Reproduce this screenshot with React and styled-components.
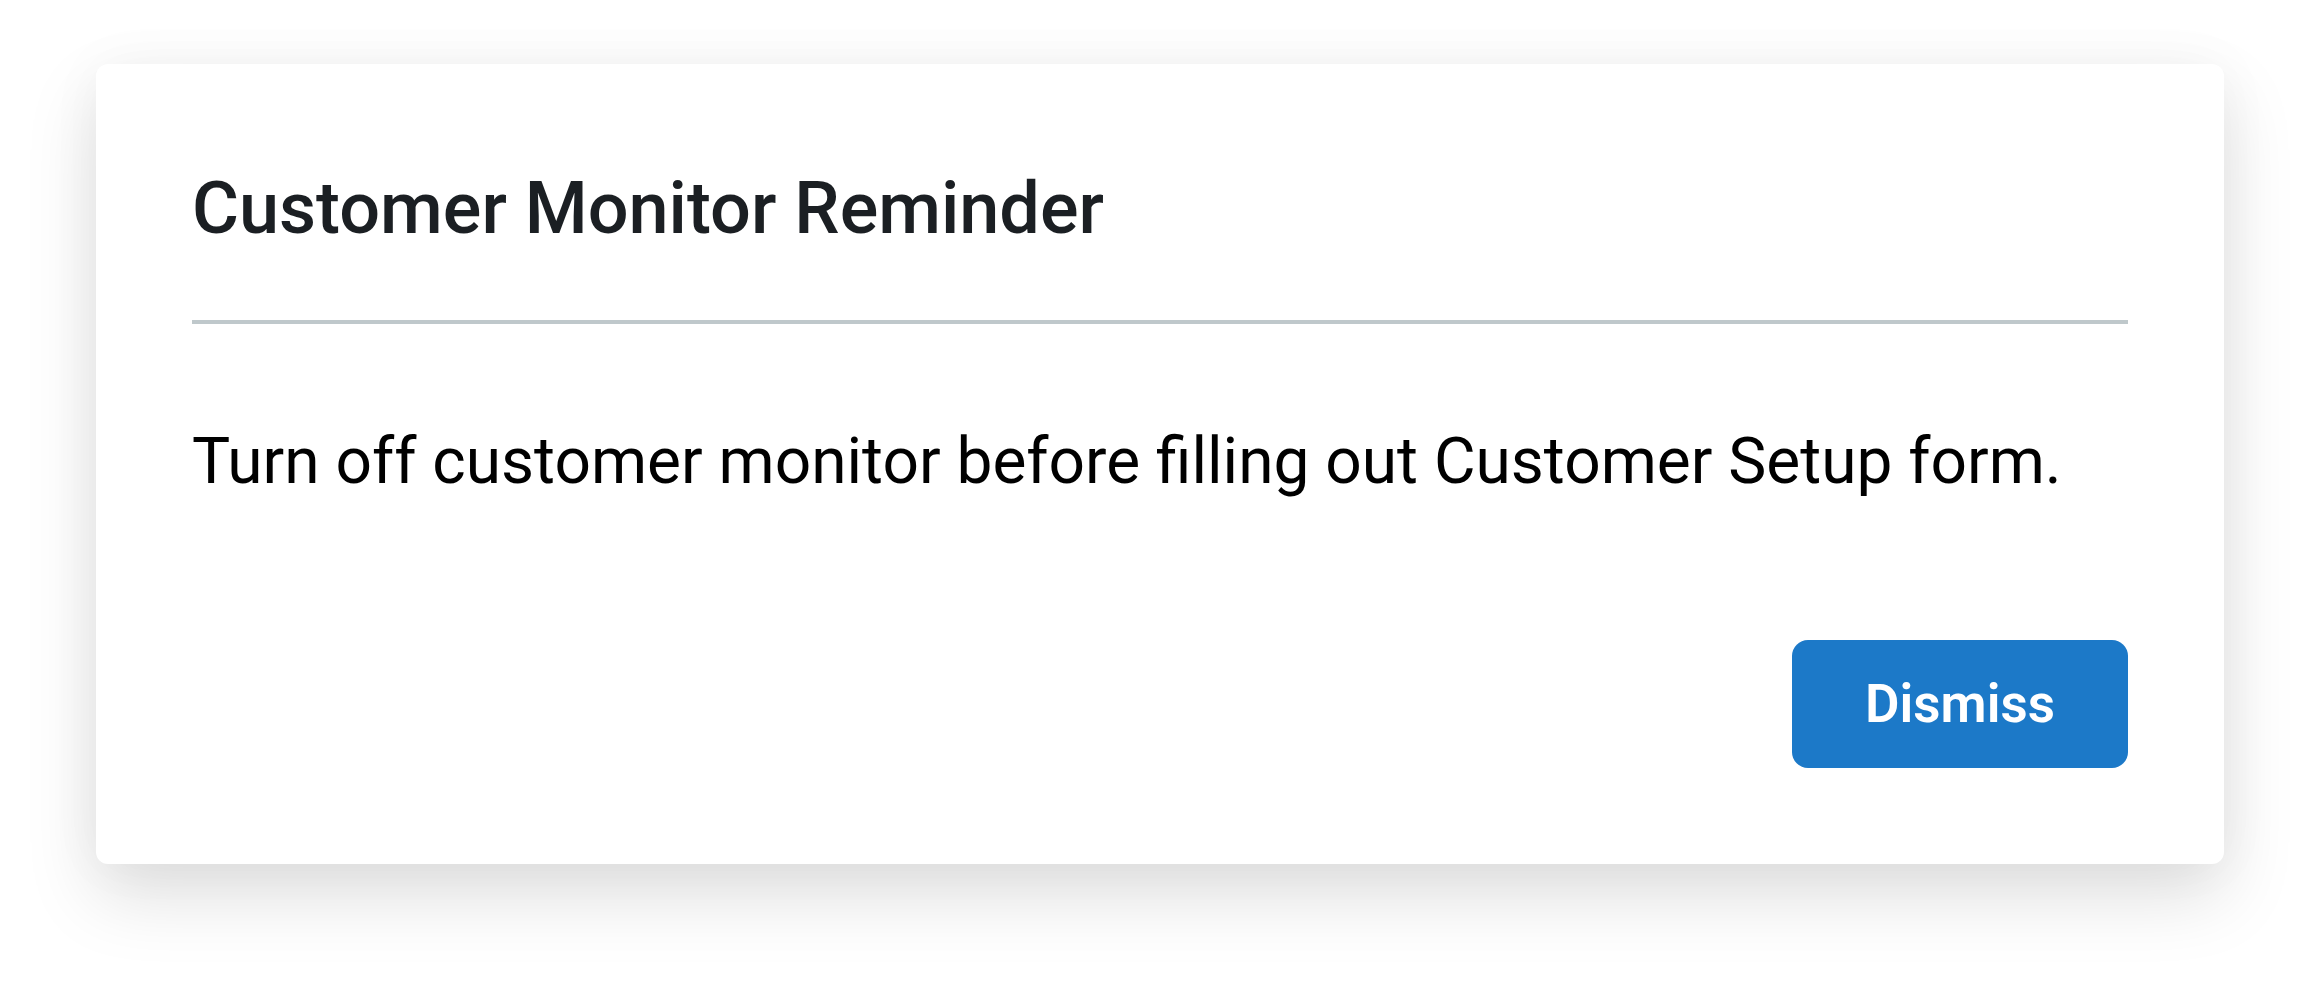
import React from "react";
import styled, { createGlobalStyle } from "styled-components";

const GlobalStyle = createGlobalStyle`
  html, body {
    margin: 0;
    padding: 0;
    background: #ffffff;
    font-family: Roboto, "Liberation Sans", Arial, sans-serif;
  }
`;

function App() {
  return (
    <>
      <GlobalStyle />
      <Page>
        <Card>
          <Title>Customer Monitor Reminder</Title>
          <Divider />
          <Message>
            Turn off customer monitor before filling out Customer Setup form.
          </Message>
          <Actions>
            <Button type="button">Dismiss</Button>
          </Actions>
        </Card>
      </Page>
    </>
  );
}

export default App;

const Page = styled.div`
  width: 2320px;
  height: 992px;
  box-sizing: border-box;
  padding: 64px 96px;
`;

const Card = styled.div`
  display: flex;
  flex-direction: column;
  background-color: #ffffff;
  border-radius: 12px;
  padding: 96px;
  box-shadow: 0 32px 72px rgba(0, 0, 0, 0.13), 0 0 56px rgba(0, 0, 0, 0.04);
`;

const Title = styled.h1`
  margin: 0;
  font-size: 72px;
  line-height: 97px;
  font-weight: 500;
  color: #1b1f23;
`;

const Divider = styled.div`
  height: 4px;
  margin-top: 63px;
  background-color: #bfc8cb;
`;

const Message = styled.p`
  margin: 90px 0 0;
  font-size: 64px;
  line-height: 96px;
  font-weight: 400;
  color: #000000;
`;

const Actions = styled.div`
  display: flex;
  justify-content: flex-end;
  margin-top: 130px;
`;

const Button = styled.button`
  width: 336px;
  height: 128px;
  border: none;
  border-radius: 16px;
  background-color: #1c79c8;
  color: #ffffff;
  font-family: Roboto, "Liberation Sans", Arial, sans-serif;
  font-size: 53px;
  font-weight: 600;
  cursor: pointer;
`;
